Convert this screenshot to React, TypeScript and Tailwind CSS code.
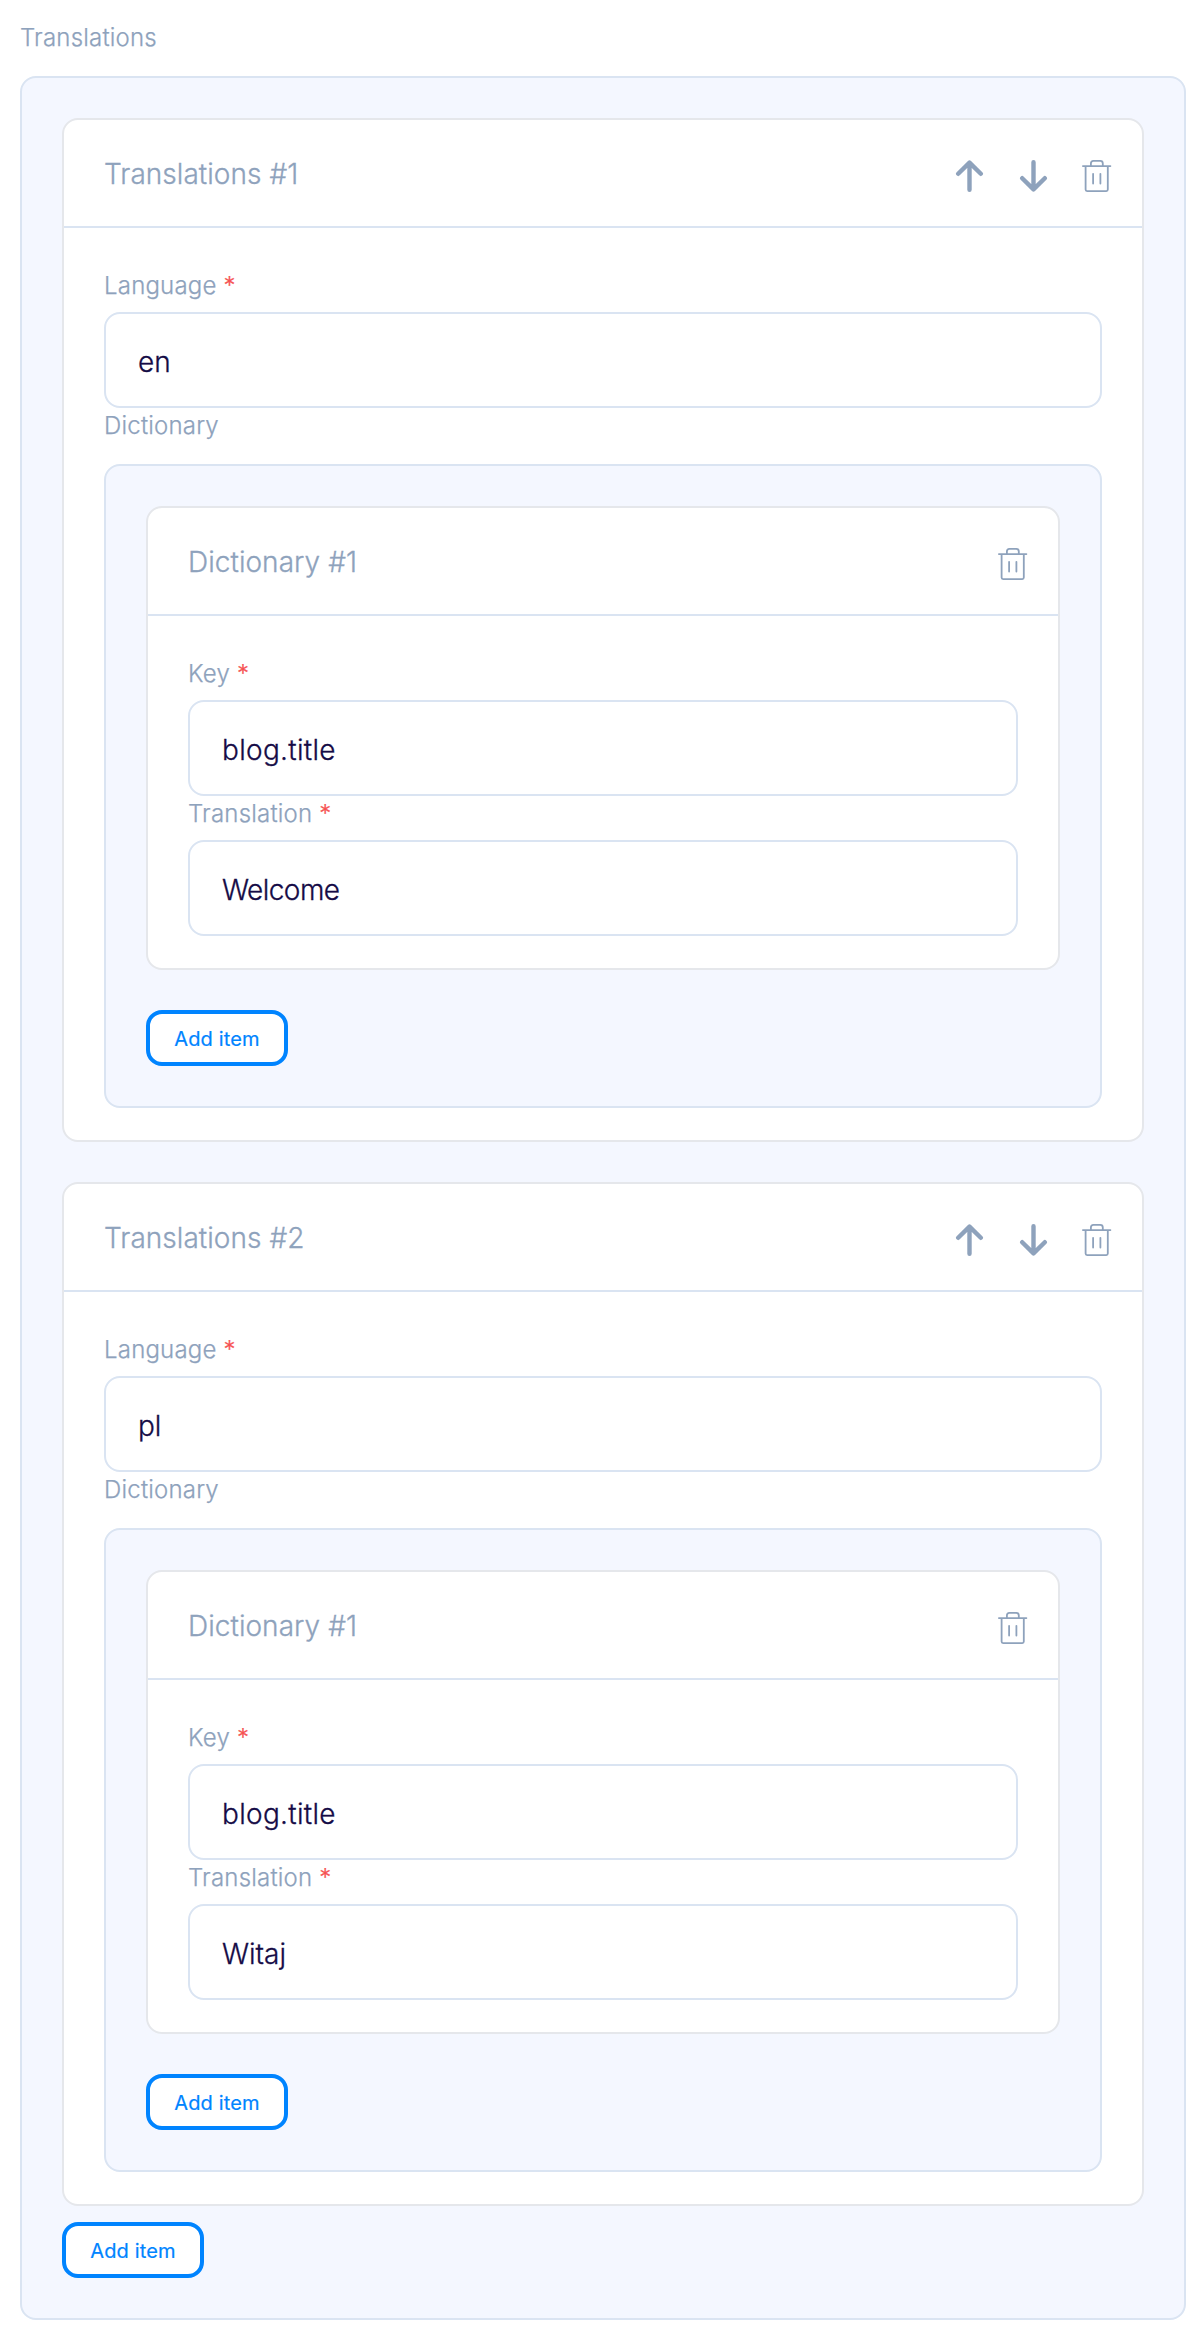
import type { ReactNode } from "react";

type Entry = { key: string; translation: string; tracking: string };
type Translation = { language: string; dictionary: Entry[] };

const translations: Translation[] = [
  { language: "en", dictionary: [{ key: "blog.title", translation: "Welcome", tracking: "tracking-[-0.55px]" }] },
  { language: "pl", dictionary: [{ key: "blog.title", translation: "Witaj", tracking: "tracking-normal" }] },
];

function ArrowUp() {
  return (
    <svg className="h-8 w-8" viewBox="0 0 32 32" fill="none" stroke="currentColor" strokeWidth="4.4" strokeLinecap="round" strokeLinejoin="round">
      <path d="M16.5 29.8V3M5.2 13.8 16.5 2.6l11.3 11.2" />
    </svg>
  );
}

function ArrowDown() {
  return (
    <svg className="h-8 w-8" viewBox="0 0 32 32" fill="none" stroke="currentColor" strokeWidth="4.4" strokeLinecap="round" strokeLinejoin="round">
      <path d="M16.5 2.2V29M5.2 18.2 16.5 29.4l11.3-11.2" />
    </svg>
  );
}

function Trash() {
  return (
    <svg className="h-8 w-8" viewBox="0 0 32 32" fill="none" stroke="currentColor" strokeWidth="1.8" strokeLinecap="round" strokeLinejoin="round">
      <path d="M1.9 6.1h27.5M4.6 6.1v23.5q0 1.5 1.5 1.5h19.2q1.5 0 1.5-1.5V6.1M9.9 6.1V3.4q0-2.5 2.5-2.5h6.9q2.5 0 2.5 2.5v2.7M12.1 13.8v9.7M19.4 13.8v9.7" />
    </svg>
  );
}

function Label({ children, required }: { children: ReactNode; required?: boolean }) {
  return (
    <div className="h-8 pt-0.5 text-2xl leading-8 font-light tracking-[0.2px] text-[#8ea2bc] [-webkit-text-stroke:0.25px]">
      {children}
      {required && <span className="ml-[7px] text-[#f65252]">*</span>}
    </div>
  );
}

function Field({ label, value, tracking = "tracking-normal" }: { label: string; value: string; tracking?: string }) {
  return (
    <div>
      <Label required>{label}</Label>
      <input
        className={`mt-3 block h-24 w-full rounded-2xl border-2 border-[#dae4f2] bg-white px-8 pt-1 text-[28px] font-light text-[#150b46] outline-none [-webkit-text-stroke:0.3px] ${tracking}`}
        defaultValue={value}
      />
    </div>
  );
}

function AddButton() {
  return (
    <button className="flex h-14 w-[142px] items-center justify-center rounded-2xl border-4 border-[#0084ff] bg-white pt-px text-xl tracking-[0.15px] text-[#0084ff] [-webkit-text-stroke:0.2px]">
      Add item
    </button>
  );
}

function Panel({ children }: { children: ReactNode }) {
  return <div className="mt-6 rounded-2xl border-2 border-[#dae4f2] bg-[#f4f7ff] p-10">{children}</div>;
}

function Card({ title, movable, children }: { title: string; movable?: boolean; children: ReactNode }) {
  return (
    <section className="rounded-2xl border-2 border-[#e5e7eb] bg-white">
      <header className="flex h-[108px] items-center justify-between border-b-2 border-[#dae4f2] pr-[29px] pl-10 text-[#8ea2bc]">
        <h2 className="pt-0.5 text-[28px] font-light tracking-[0.05px] [-webkit-text-stroke:0.3px]">{title}</h2>
        <div className="flex gap-8 pt-1.5">
          {movable && <button aria-label="Move up"><ArrowUp /></button>}
          {movable && <button aria-label="Move down"><ArrowDown /></button>}
          <button aria-label="Delete"><Trash /></button>
        </div>
      </header>
      <div className="px-10 pt-10 pb-8">{children}</div>
    </section>
  );
}

export default function App() {
  return (
    <main className="h-[2340px] w-[1204px] bg-white pt-5 pr-[18px] pb-5 pl-5 font-['Inter',sans-serif]">
      <Label>Translations</Label>
      <Panel>
        <div className="flex flex-col gap-10">
          {translations.map((item, i) => (
            <Card key={item.language} title={`Translations #${i + 1}`} movable>
              <Field label="Language" value={item.language} />
              <Label>Dictionary</Label>
              <Panel>
                <div className="mb-10 flex flex-col gap-10">
                  {item.dictionary.map((entry, j) => (
                    <Card key={entry.key} title={`Dictionary #${j + 1}`}>
                      <Field label="Key" value={entry.key} tracking="tracking-[0.3px]" />
                      <Field label="Translation" value={entry.translation} tracking={entry.tracking} />
                    </Card>
                  ))}
                </div>
                <AddButton />
              </Panel>
            </Card>
          ))}
        </div>
        <div className="mt-4">
          <AddButton />
        </div>
      </Panel>
    </main>
  );
}
